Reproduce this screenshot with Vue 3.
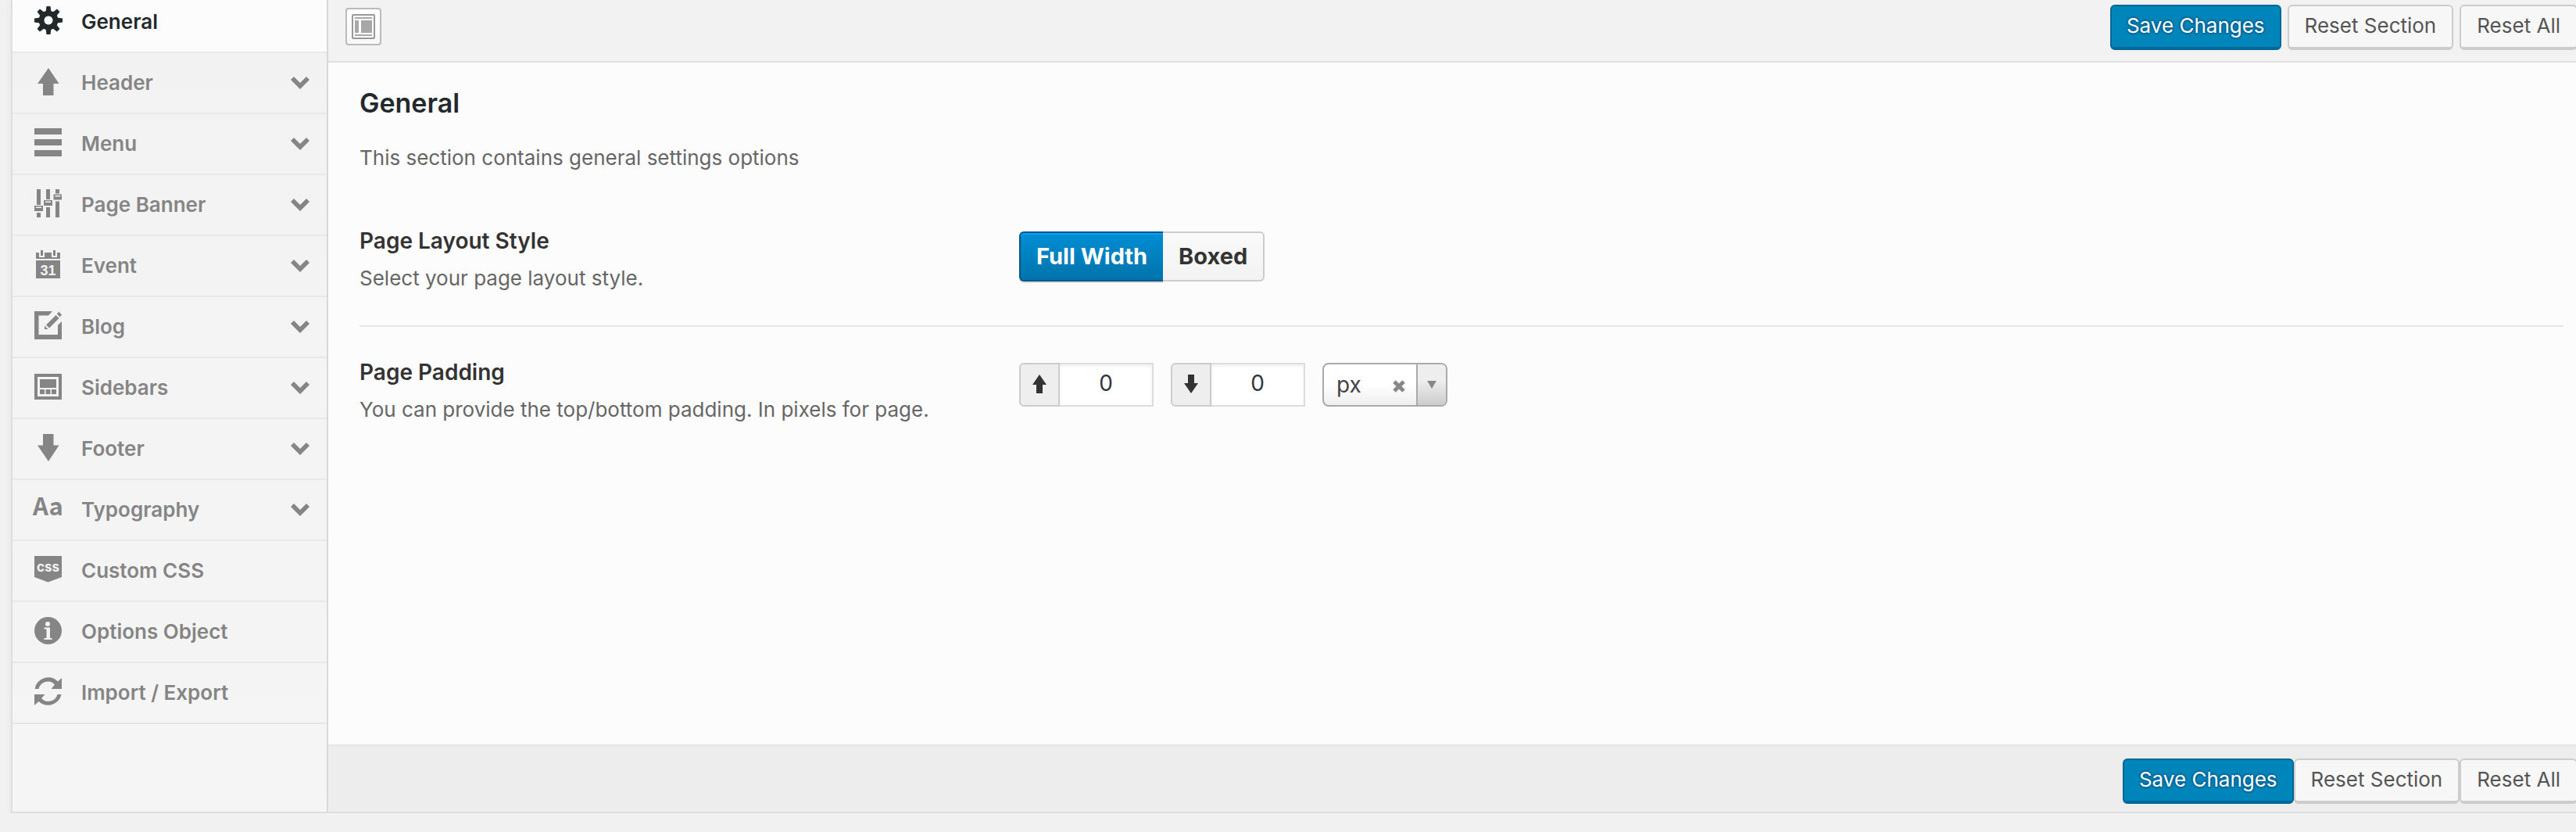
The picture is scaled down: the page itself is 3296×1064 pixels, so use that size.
<script setup>
import { ref } from 'vue'

const items = [
  { name: 'General', icon: 'gear', active: true },
  { name: 'Header', icon: 'up', sub: true },
  { name: 'Menu', icon: 'menu', sub: true },
  { name: 'Page Banner', icon: 'sliders', sub: true },
  { name: 'Event', icon: 'calendar', sub: true },
  { name: 'Blog', icon: 'edit', sub: true },
  { name: 'Sidebars', icon: 'website', sub: true },
  { name: 'Footer', icon: 'down', sub: true },
  { name: 'Typography', icon: 'type', sub: true },
  { name: 'Custom CSS', icon: 'css' },
  { name: 'Options Object', icon: 'info' },
  { name: 'Import / Export', icon: 'refresh' },
]
const teeth = [0, 45, 90, 135, 180, 225, 270, 315]
const layout = ref('full')
const top = ref('0')
const bottom = ref('0')
const unit = ref('px')
</script>

<template>
  <div class="panel">
    <nav class="sidebar" aria-label="Sections">
      <ul>
        <li v-for="item in items" :key="item.name" :class="{ active: item.active }">
          <a href="#">
            <svg class="icon" viewBox="0 0 36 40" aria-hidden="true">
              <g v-if="item.icon === 'gear'">
                <path fill-rule="evenodd" d="M18 5.500a12.500 12.500 0 1 0 .01 0zM18 12.500a5.500 5.500 0 1 1-.01 0z" />
                <path v-for="t in teeth" :key="t" d="M14.500 7.500 15.500 0h5l1 7.500z" :transform="`rotate(${t} 18 18)`" />
              </g>
              <path v-else-if="item.icon === 'up'" d="M18 1 31.500 21H24.500V36H11V21H4z" />
              <path v-else-if="item.icon === 'down'" d="M18 36 31.500 15.500H24.500V1H11V15.500H4z" />
              <path v-else-if="item.icon === 'menu'" d="M0 0h35v8H0zM0 14h35v8H0zM0 28h35v8H0z" />
              <path v-else-if="item.icon === 'sliders'" fill-rule="evenodd" d="M3 0h5v20H3zM0 21h11v7H0zM2 22.500v1.500h7v-1.500zM3 30h5v6H3zM15 0h5v13H15zM12 14h11v7H12zM14 15.500v1.500h7v-1.500zM15 23h5v13H15zM27 0h5v5.500H27zM24.500 6.500H35v7H24.500zM26.500 8v1.500h7V8zM27 15.500h5V36H27z" />
              <g v-else-if="item.icon === 'calendar'">
                <path d="M2 3h4v6h7V3h9v6h7V3h4v8H2zM8 0h3v7H8zM24 0h3v7h-3zM2 13h31v23H2z" />
                <text x="17.500" y="31.500" class="num">31</text>
              </g>
              <g v-else-if="item.icon === 'edit'">
                <path d="M0 0h23l-5 5.500H5.500V30h24.500V18l5-5V36H0z" />
                <path d="M15 17.500 27.500 5l4 4L19 21.500zM29 3.500l2-3 4 4-2.500 3zM13 18.500l4.500 4.500H13z" />
              </g>
              <path v-else-if="item.icon === 'website'" fill-rule="evenodd" d="M0 2h35v33H0zM4 6v25h27V6zM7 9h21v11H7zM7 22h6v6H7zM14.500 22h6v6h-6zM22 22h6v6h-6z" />
              <text v-else-if="item.icon === 'type'" x="17.500" y="27" class="type">Aa</text>
              <g v-else-if="item.icon === 'css'">
                <path d="M0 1h35v27l-17.500 6.500L0 28z" />
                <text x="17.500" y="20.500" class="css">css</text>
              </g>
              <g v-else-if="item.icon === 'info'">
                <circle cx="17.500" cy="18.500" r="17.500" />
                <circle class="hole" cx="17" cy="10" r="3" />
                <path class="hole" d="M12.500 14.500h7.500V28h2.500v2H12.500v-2H15.500V16.500h-3z" />
              </g>
              <path v-else d="M.5 15A17.500 17.500 0 0 1 30 5.500L35 1V15H21.500L26 9.500A12 12 0 0 0 5.500 15zM34.500 22A17.500 17.500 0 0 1 5.500 31L0 36V22H13.500L9 27A12 12 0 0 0 29.500 22z" />
            </svg>
            <span>{{ item.name }}</span>
            <svg v-if="item.sub" class="chevron" viewBox="0 0 24 16" aria-hidden="true"><path d="M0 4 4 0l8 8 8-8 4 4-12 12z" /></svg>
          </a>
        </li>
      </ul>
    </nav>

    <main class="main">
      <header class="toolbar">
        <button class="expand" type="button" aria-label="Expand options">
          <svg viewBox="0 0 32 34" aria-hidden="true">
            <rect x="2" y="2" width="28" height="30" rx="1" fill="#fff" stroke="#999" stroke-width="2" />
            <path d="M5 5h22v2H5zM5 9h5v16H5zM13 9h14v16H13zM5 27h22v2H5z" fill="#a8a8a8" />
          </svg>
        </button>
        <div class="actions spaced">
          <button class="btn primary" type="button">Save Changes</button>
          <button class="btn" type="button">Reset Section</button>
          <button class="btn" type="button">Reset All</button>
        </div>
      </header>

      <section class="content">
        <h2>General</h2>
        <p class="intro">This section contains general settings options</p>

        <div class="row">
          <div class="label">
            <h3 id="layout-label">Page Layout Style</h3>
            <p>Select your page layout style.</p>
          </div>
          <div class="segments" role="radiogroup" aria-labelledby="layout-label">
            <label :class="{ on: layout === 'full' }"><input v-model="layout" type="radio" name="layout" value="full" />Full Width</label>
            <label :class="{ on: layout === 'boxed' }"><input v-model="layout" type="radio" name="layout" value="boxed" />Boxed</label>
          </div>
        </div>

        <div class="row">
          <div class="label">
            <h3>Page Padding</h3>
            <p>You can provide the top/bottom padding. In pixels for page.</p>
          </div>
          <div class="fields">
            <div class="field">
              <label for="pad-top" aria-label="Top padding"><svg viewBox="0 0 18 24" aria-hidden="true"><path d="M9 0 18 13H13V24H5V13H0z" /></svg></label>
              <input id="pad-top" v-model="top" type="text" />
            </div>
            <div class="field">
              <label for="pad-bottom" aria-label="Bottom padding"><svg viewBox="0 0 18 24" aria-hidden="true"><path d="M9 24 18 11H13V0H5V11H0z" /></svg></label>
              <input id="pad-bottom" v-model="bottom" type="text" />
            </div>
            <div class="unit">
              <select v-model="unit" aria-label="Unit">
                <option>px</option>
                <option>em</option>
                <option>%</option>
              </select>
              <button class="clear" type="button" aria-label="Clear">
                <svg viewBox="0 0 16 16" aria-hidden="true"><path d="M2 2 14 14M14 2 2 14" stroke="#888" stroke-width="5" /></svg>
              </button>
              <span class="arrow"><svg viewBox="0 0 12 10" aria-hidden="true"><path d="M0 0h12L6 10z" fill="#888" /></svg></span>
            </div>
          </div>
        </div>
      </section>

      <footer class="footer">
        <div class="actions">
          <button class="btn primary" type="button">Save Changes</button>
          <button class="btn" type="button">Reset Section</button>
          <button class="btn" type="button">Reset All</button>
        </div>
      </footer>
    </main>
  </div>
</template>

<style>
body {
  margin: 0;
  background: #f1f1f1;
}
</style>

<style scoped>
* {
  box-sizing: border-box;
}
.panel {
  display: flex;
  min-height: calc(100vh - 24px);
  margin-left: 14px;
  border: solid #dedede;
  border-width: 0 0 2px 2px;
  box-shadow: 0 2px 10px rgba(0, 0, 0, 0.05);
  overflow: hidden;
  font: 26px/36px Inter, "Liberation Sans", sans-serif;
  color: #666;
}
h2, h3, p, ul {
  margin: 0;
  padding: 0;
}
button, input, select {
  font: inherit;
  margin: 0;
}
.sidebar {
  flex: 0 0 404px;
  background: linear-gradient(#f2f2f2, #f5f5f5);
  border-right: 2px solid #d8d8d8;
}
ul {
  list-style: none;
}
li a {
  display: flex;
  align-items: center;
  height: 78px;
  padding: 0 22px 0 28px;
  border-bottom: 2px solid #e8e8e8;
  color: #858585;
  font-weight: 600;
  text-decoration: none;
}
.active a {
  height: 68px;
  padding-bottom: 10px;
  background: #fcfcfc;
  color: #23282d;
}
.icon {
  width: 36px;
  height: 40px;
  margin-right: 24px;
  fill: currentColor;
  overflow: visible;
}
.icon text {
  text-anchor: middle;
  font-weight: 700;
}
.icon .num {
  fill: #f3f3f3;
  font: 700 18px "Liberation Sans", sans-serif;
}
.icon .type {
  font: 700 31px "Noto Sans CJK JP", sans-serif;
}
.icon .css {
  fill: #f3f3f3;
  font-size: 17px;
}
.hole {
  fill: #f3f3f3;
}
.chevron {
  width: 24px;
  height: 16px;
  margin-left: auto;
  fill: currentColor;
}
.main {
  display: flex;
  flex: 1;
  flex-direction: column;
  min-width: 0;
  background: #fcfcfc;
}
.toolbar {
  display: flex;
  align-items: flex-start;
  justify-content: space-between;
  height: 80px;
  padding: 6px 0 0 22px;
  background: #f2f2f2;
  border-bottom: 2px solid #dedede;
}
.expand {
  width: 46px;
  height: 48px;
  margin-top: 4px;
  padding: 5px;
  border: 2px solid #bbb;
  border-radius: 4px;
  background: linear-gradient(#fff, #f8f8f8);
}
.expand svg {
  display: block;
  width: 32px;
  height: 34px;
}
.actions {
  display: flex;
  margin-right: -2px;
}
.spaced {
  gap: 8px;
}
.btn {
  height: 58px;
  padding: 0 20px 2px;
  border: 2px solid #ccc;
  border-bottom-width: 4px;
  border-radius: 6px;
  background: #f7f7f7;
  color: #555;
  white-space: nowrap;
}
.btn.primary {
  padding: 0 19px 2px;
  border-color: #006799;
  background: #0085ba;
  color: #fff;
  text-shadow: 0 -2px 2px #006799, 2px 0 2px #006799, 0 2px 2px #006799, -2px 0 2px #006799;
}
.content {
  flex: 1;
  padding: 28px 16px 0 40px;
}
h2 {
  font-size: 34px;
  line-height: 48px;
  font-weight: 600;
  color: #23282d;
}
.intro {
  margin: 28px 0 30px;
}
.row {
  display: flex;
  align-items: flex-start;
  padding: 46px 0 42px;
}
.row + .row {
  border-top: 2px solid #e5e5e5;
}
.label {
  flex: 0 0 calc(30% - 2px);
}
h3 {
  margin: -6px 0 12px;
  font-size: 28px;
  line-height: 36px;
  font-weight: 600;
  color: #333;
}
.segments {
  display: flex;
}
.segments label {
  display: flex;
  align-items: center;
  height: 64px;
  padding: 0 20px;
  border: 2px solid #ccc;
  border-left: 0;
  border-radius: 0 6px 6px 0;
  background: linear-gradient(#f9f9f9, #f3f3f3);
  color: #333;
  font-size: 29px;
  font-weight: 700;
}
.segments label.on {
  border: 2px solid #005684;
  border-right: 0;
  border-radius: 6px 0 0 6px;
  background: linear-gradient(#008ed4, #0073aa);
  box-shadow: inset 0 2px #00a0f2, 0 2px #ddd;
  color: #fff;
}
.segments input {
  position: absolute;
  opacity: 0;
  pointer-events: none;
}
.fields {
  display: flex;
  gap: 22px;
}
.field {
  display: flex;
}
.field label {
  display: flex;
  align-items: center;
  justify-content: center;
  width: 52px;
  height: 56px;
  padding-bottom: 2px;
  border: 2px solid #ccc;
  border-radius: 6px 0 0 6px;
  background: #eee;
}
.field label svg {
  width: 18px;
  height: 24px;
  fill: #333;
}
.field input {
  width: 120px;
  height: 56px;
  padding: 0 0 4px;
  border: 2px solid #ddd;
  border-left: 0;
  background: #fff;
  box-shadow: inset 0 2px 4px rgba(0, 0, 0, 0.07);
  color: #32373c;
  font-size: 28px;
  text-align: center;
}
.unit {
  position: relative;
}
.unit select {
  display: block;
  width: 160px;
  height: 56px;
  padding: 0 0 0 16px;
  border: 2px solid #aaa;
  border-radius: 8px;
  appearance: none;
  background: linear-gradient(#fff 50%, #eee);
  color: #444;
  font-size: 28px;
}
.clear {
  position: absolute;
  top: 22px;
  right: 54px;
  width: 16px;
  height: 16px;
  padding: 0;
  border: 0;
  background: none;
}
.clear svg {
  display: block;
}
.arrow {
  position: absolute;
  inset: 2px 2px 2px auto;
  display: flex;
  align-items: center;
  justify-content: center;
  width: 38px;
  border-left: 2px solid #aaa;
  border-radius: 0 6px 6px 0;
  background: linear-gradient(#eee 40%, #ccc);
  pointer-events: none;
}
.arrow svg {
  width: 12px;
  height: 10px;
}
.footer {
  display: flex;
  justify-content: flex-end;
  height: 86px;
  padding-top: 16px;
  border-top: 2px solid #e5e5e5;
  background: #ededed;
}
</style>
